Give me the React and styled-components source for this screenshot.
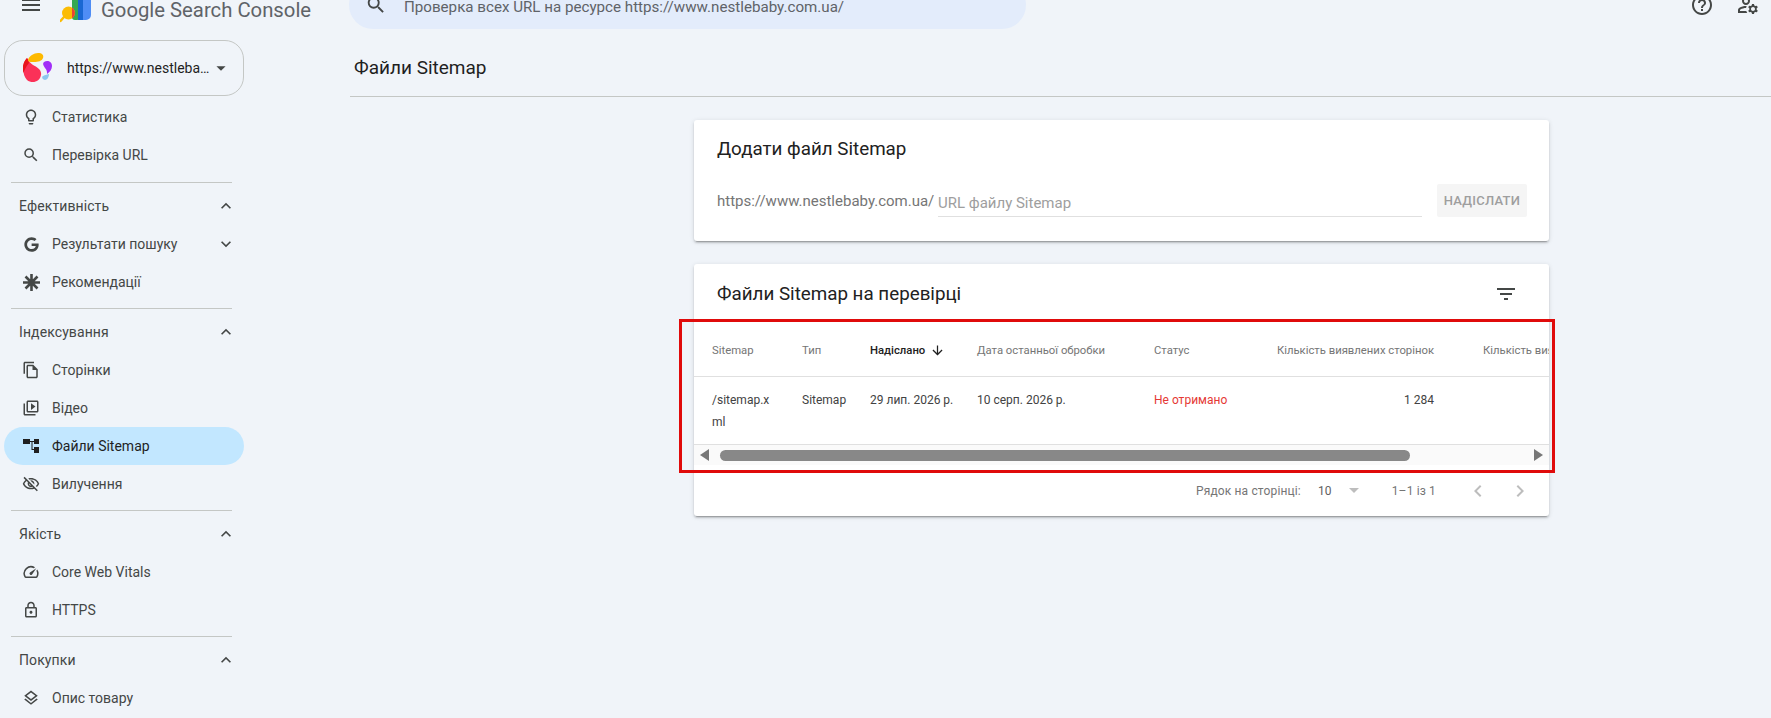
import styled, { createGlobalStyle } from "styled-components"
import {
  MdMenu,
  MdSearch,
  MdHelpOutline,
  MdOutlineManageAccounts,
  MdOutlineLightbulb,
  MdKeyboardArrowUp,
  MdKeyboardArrowDown,
  MdOutlineFileCopy,
  MdOutlineVideoLibrary,
  MdOutlineVisibilityOff,
  MdOutlineSpeed,
  MdOutlineLock,
  MdOutlineLayers,
  MdArrowDropDown,
  MdFilterList,
  MdArrowDownward,
  MdChevronLeft,
  MdChevronRight,
} from "react-icons/md"
import { FaGoogle } from "react-icons/fa"

const GlobalStyle = createGlobalStyle`
  * {
    box-sizing: border-box;
  }
  html, body {
    margin: 0;
    height: 718px;
    overflow: hidden;
    background: #f0f4f9;
    font-family: Roboto, "Liberation Sans", sans-serif;
  }
`

const Page = styled.div`
  margin-top: -19px;
  width: 1771px;
`

const TopBar = styled.header`
  display: flex;
  align-items: center;
  height: 48px;
  padding-left: 19px;
`

const IconButton = styled.span`
  display: inline-flex;
  align-items: center;
  justify-content: center;
  margin-right: ${(p) => p.$pull || 0}px;
  color: ${(p) => p.$color || "#444746"};
  font-size: ${(p) => p.$size || 24}px;
`

const Brand = styled.div`
  display: flex;
  align-items: center;
  gap: 10px;
  margin-left: 17px;
  padding-top: 12px;
  width: 289px;
  height: 48px;
`

const BrandName = styled.span`
  margin-top: -2px;
  font-size: 20.3px;
  color: #5f6368;
  white-space: nowrap;
`

const SearchBar = styled.div`
  display: flex;
  align-items: center;
  width: 677px;
  height: 48px;
  padding-left: 16px;
  gap: 17px;
  border-radius: 24px;
  background: #e3ecfb;
`

const SearchText = styled.span`
  padding-top: 3px;
  font-size: 15.15px;
  color: #5f6368;
  white-space: nowrap;
`

const TopActions = styled.div`
  display: flex;
  align-items: center;
  gap: 22px;
  margin-left: auto;
  padding-right: 11px;
`

const Body = styled.div`
  display: flex;
`

const Sidebar = styled.aside`
  flex: 0 0 350px;
  padding: 11px 0 0 4px;
`

const PropertySelect = styled.div`
  display: flex;
  align-items: center;
  width: 240px;
  height: 56px;
  padding-left: 18px;
  border: 1px solid #c4c7c5;
  border-radius: 19px;
`

const PropertyName = styled.span`
  width: 146px;
  margin-left: 14px;
  margin-right: -3px;
  font-size: 14px;
  color: #1f1f1f;
  white-space: nowrap;
  overflow: hidden;
  text-overflow: ellipsis;
`

const Nav = styled.nav`
  width: 240px;
  margin-top: 2px;
`

const Group = styled.div`
  padding-bottom: 8px;
`

const Section = styled.div`
  border-top: 1px solid #c4c7c5;
  margin-left: 7px;
  margin-right: 12px;
  padding-top: 4px;
`

const SectionHead = styled.div`
  display: flex;
  align-items: center;
  justify-content: space-between;
  height: 37px;
  padding-left: 8px;
  font-size: 14px;
  letter-spacing: 0.1px;
  color: #444746;
`

const SectionItems = styled.div`
  margin-left: -7px;
  margin-right: -12px;
  padding-top: 1px;
  padding-bottom: 7px;
`

const NavRow = styled.div`
  display: flex;
  align-items: center;
  height: 38px;
  padding-left: 18px;
  padding-right: 8px;
  border-radius: 19px;
  font-size: 14px;
  color: ${(p) => (p.$active ? "#1f1f1f" : "#444746")};
  background: ${(p) => (p.$active ? "#c2e7ff" : "transparent")};
`

const NavIcon = styled.span`
  display: inline-flex;
  align-items: center;
  justify-content: center;
  width: 18px;
  margin-right: 12px;
  font-size: 20px;
  color: ${(p) => (p.$active ? "#1f1f1f" : "#444746")};
`

const NavLabel = styled.span`
  flex: 1;
  white-space: nowrap;
`

const Main = styled.main`
  flex: 1;
`

const PageTitle = styled.div`
  display: flex;
  align-items: center;
  height: 68px;
  padding: 10px 0 0 4px;
  border-bottom: 1px solid #c4c7c5;
  font-size: 19px;
  color: #1f1f1f;
`

const Cards = styled.div`
  display: flex;
  flex-direction: column;
  gap: 23px;
  width: 855px;
  margin: 23px 0 0 344px;
`

const Card = styled.section`
  position: relative;
  background: #fff;
  border-radius: 3px;
  box-shadow: 0 2px 2px rgba(0, 0, 0, 0.14), 0 3px 1px -2px rgba(0, 0, 0, 0.2),
    0 1px 5px rgba(0, 0, 0, 0.12);
`

const AddCard = styled(Card)`
  height: 121px;
  padding: 18px 22px 0 23px;
`

const CardTitle = styled.h2`
  margin: 0;
  font-size: 18.8px;
  line-height: 22px;
  font-weight: 400;
  color: #212121;
`

const AddRow = styled.div`
  display: flex;
  align-items: flex-end;
  margin-top: 24px;
`

const UrlPrefix = styled.span`
  width: 221px;
  height: 33px;
  line-height: 34px;
  font-size: 15px;
  color: #757575;
  white-space: nowrap;
`

const UrlInput = styled.div`
  width: 484px;
  height: 31px;
  line-height: 35px;
  font-size: 15px;
  color: #9e9e9e;
  border-bottom: 1px solid #e0e0e0;
`

const SubmitButton = styled.div`
  display: flex;
  align-items: center;
  justify-content: center;
  width: 90px;
  height: 33px;
  margin-left: 15px;
  border-radius: 2px;
  background: #f5f5f5;
  color: #9e9e9e;
  font-size: 13px;
  font-weight: 500;
  letter-spacing: 0.25px;
`

const ListHead = styled.div`
  display: flex;
  align-items: center;
  justify-content: space-between;
  height: 60px;
  padding: 0 31px 0 23px;
`

const Table = styled.div`
  overflow: hidden;
`

const Row = styled.div`
  display: grid;
  grid-template-columns: 90px 68px 107px 177px 123px 206px 206px;
  width: 1200px;
  padding-left: 18px;
  height: ${(p) => p.$height}px;
`

const Divider = styled.div`
  border-bottom: 1px solid #e0e0e0;
`

const HeadCell = styled.div`
  display: flex;
  align-items: center;
  gap: 5px;
  justify-content: ${(p) => (p.$right ? "flex-end" : "flex-start")};
  padding-right: ${(p) => (p.$right ? "49px" : "0")};
  font-size: 11.3px;
  font-weight: ${(p) => (p.$sorted ? 500 : 400)};
  white-space: nowrap;
  color: ${(p) => (p.$sorted ? "#212121" : "#757575")};
`

const DataCell = styled.div`
  width: ${(p) => (p.$narrow ? "62px" : "auto")};
  padding-top: 12px;
  padding-right: ${(p) => (p.$right ? "49px" : "0")};
  text-align: ${(p) => (p.$right ? "right" : "left")};
  font-size: 12px;
  line-height: 22px;
  word-break: ${(p) => (p.$narrow ? "break-all" : "normal")};
  color: ${(p) => (p.$error ? "#e53935" : "#424242")};
`

const ScrollBar = styled.div`
  display: flex;
  align-items: center;
  height: 20px;
  padding: 0 6px;
  background: #fafafa;
`

const ScrollArrow = styled.span`
  width: 0;
  height: 0;
  border-top: 6px solid transparent;
  border-bottom: 6px solid transparent;
  border-left: ${(p) => (p.$right ? "9px solid #777" : "0")};
  border-right: ${(p) => (p.$right ? "0" : "9px solid #777")};
`

const ScrollTrack = styled.div`
  flex: 1;
  padding-left: 11px;
`

const ScrollThumb = styled.div`
  width: 690px;
  height: 11px;
  border-radius: 6px;
  background: #888;
`

const Pager = styled.div`
  display: flex;
  align-items: center;
  justify-content: flex-end;
  height: 51px;
  padding-right: 17px;
  font-size: 12px;
  letter-spacing: 0.15px;
  color: #757575;
`

const PagerCount = styled.span`
  margin-left: ${(p) => p.$gap}px;
  color: ${(p) => p.$color || "#757575"};
  white-space: nowrap;
`

const PagerCaret = styled.span`
  width: 0;
  height: 0;
  margin-left: 17px;
  border-left: 5px solid transparent;
  border-right: 5px solid transparent;
  border-top: 5px solid #bdbdbd;
`

const PagerNav = styled.span`
  display: inline-flex;
  margin-left: ${(p) => p.$gap}px;
  font-size: 24px;
  color: #bdbdbd;
`

const Highlight = styled.div`
  position: absolute;
  left: -15px;
  right: -6px;
  top: 55px;
  height: 154px;
  border: 3px solid #e00b0b;
  pointer-events: none;
`

function SearchConsoleLogo() {
  return (
    <svg width="31" height="40" viewBox="0 2 31 40">
      <rect x="12" y="6" width="8" height="25" rx="3" fill="#34a853" />
      <rect x="18" y="1" width="6" height="30" fill="#1967d2" />
      <path d="M23 1a3 3 0 0 1 3-1h2a3 3 0 0 1 3 3v23a5 5 0 0 1-5 5h-3z" fill="#4f8df5" />
      <circle cx="8.5" cy="24" r="6.5" fill="#fbbc04" />
      <path d="M12 18.6a6.5 6.5 0 0 1 0 10.8z" fill="#ea4335" />
      <path d="M4 28l-3.5 4" stroke="#fbbc04" strokeWidth="2.4" strokeLinecap="round" />
    </svg>
  )
}

function PropertyLogo() {
  return (
    <svg width="30" height="30" viewBox="0 0 30 30">
      <path d="M4 5C-1 10-1 22 4 27c5 4 13 2 14-5 1-5-4-8-8-10-3-2-4-4-6-7z" fill="#fb3158" />
      <path d="M4 5C0 9-1 15 0 20c2-3 3-7 6-10 0-2-1-3-2-5z" fill="#e8141c" />
      <path d="M5 7c1-4 6-7 10-7 4 0 6 2 5 5-1 3-5 4-9 4-3 0-6 0-6-2z" fill="#fdb900" />
      <path d="M21 9c3-2 8-1 8 4 0 3-2 6-5 8 0-2 0-4-2-6-1-2-3-4-1-6z" fill="#a12ef7" />
      <path d="M20 23c2-1 5-2 6-2 0 3-2 6-4 6s-4-3-2-4z" fill="#8cc6ee" />
    </svg>
  )
}

function SitemapIcon() {
  return (
    <svg width="16" height="14" viewBox="0 0 16 14" fill="#1f1f1f">
      <rect x="0" y="0" width="7" height="5" />
      <rect x="11" y="0" width="5" height="5" />
      <rect x="11" y="8" width="5" height="6" />
      <path d="M7 2h4v1H9.5v7H11v1H8.5V3H7z" />
    </svg>
  )
}

function AsteriskIcon() {
  return (
    <svg width="17" height="17" viewBox="0 0 17 17" stroke="#444746" strokeWidth="2.6">
      <path d="M8.5 0v17M0 8.5h17M2.5 2.5l12 12M14.5 2.5l-12 12" />
    </svg>
  )
}

const groups = [
  {
    title: "Ефективність",
    items: [
      { label: "Результати пошуку", icon: <FaGoogle size={15} />, more: true },
      { label: "Рекомендації", icon: <AsteriskIcon /> },
    ],
  },
  {
    title: "Індексування",
    items: [
      { label: "Сторінки", icon: <MdOutlineFileCopy /> },
      { label: "Відео", icon: <MdOutlineVideoLibrary /> },
      { label: "Файли Sitemap", icon: <SitemapIcon />, active: true },
      { label: "Вилучення", icon: <MdOutlineVisibilityOff /> },
    ],
  },
  {
    title: "Якість",
    items: [
      { label: "Core Web Vitals", icon: <MdOutlineSpeed /> },
      { label: "HTTPS", icon: <MdOutlineLock /> },
    ],
  },
  {
    title: "Покупки",
    items: [{ label: "Опис товару", icon: <MdOutlineLayers /> }],
  },
]

function NavItem({ item }) {
  return (
    <NavRow $active={item.active}>
      <NavIcon $active={item.active}>{item.icon}</NavIcon>
      <NavLabel>{item.label}</NavLabel>
      {item.more && (
        <IconButton $size={20}>
          <MdKeyboardArrowDown />
        </IconButton>
      )}
    </NavRow>
  )
}

function App() {
  return (
    <Page>
      <GlobalStyle />
      <TopBar>
        <IconButton $size={24}>
          <MdMenu />
        </IconButton>
        <Brand>
          <SearchConsoleLogo />
          <BrandName>Google Search Console</BrandName>
        </Brand>
        <SearchBar>
          <IconButton $size={22}>
            <MdSearch />
          </IconButton>
          <SearchText>
            Проверка всех URL на ресурсе https://www.nestlebaby.com.ua/
          </SearchText>
        </SearchBar>
        <TopActions>
          <IconButton>
            <MdHelpOutline />
          </IconButton>
          <IconButton>
            <MdOutlineManageAccounts />
          </IconButton>
        </TopActions>
      </TopBar>

      <Body>
        <Sidebar>
          <PropertySelect>
            <PropertyLogo />
            <PropertyName>https://www.nestlebaby.com.ua/</PropertyName>
            <IconButton $size={22}>
              <MdArrowDropDown />
            </IconButton>
          </PropertySelect>
          <Nav>
            <Group>
              <NavItem item={{ label: "Статистика", icon: <MdOutlineLightbulb /> }} />
              <NavItem item={{ label: "Перевірка URL", icon: <MdSearch /> }} />
            </Group>
            {groups.map((group) => (
              <Section key={group.title}>
                <SectionHead>
                  {group.title}
                  <IconButton $size={20} $pull={-4}>
                    <MdKeyboardArrowUp />
                  </IconButton>
                </SectionHead>
                <SectionItems>
                  {group.items.map((item) => (
                    <NavItem key={item.label} item={item} />
                  ))}
                </SectionItems>
              </Section>
            ))}
          </Nav>
        </Sidebar>

        <Main>
          <PageTitle>Файли Sitemap</PageTitle>
          <Cards>
            <AddCard>
              <CardTitle>Додати файл Sitemap</CardTitle>
              <AddRow>
                <UrlPrefix>https://www.nestlebaby.com.ua/</UrlPrefix>
                <UrlInput>URL файлу Sitemap</UrlInput>
                <SubmitButton>НАДІСЛАТИ</SubmitButton>
              </AddRow>
            </AddCard>

            <Card>
              <ListHead>
                <CardTitle>Файли Sitemap на перевірці</CardTitle>
                <IconButton $size={24}>
                  <MdFilterList />
                </IconButton>
              </ListHead>
              <Table>
                <Divider>
                  <Row $height={52}>
                    <HeadCell>Sitemap</HeadCell>
                    <HeadCell>Тип</HeadCell>
                    <HeadCell $sorted>
                      Надіслано <MdArrowDownward size={15} />
                    </HeadCell>
                    <HeadCell>Дата останньої обробки</HeadCell>
                    <HeadCell>Статус</HeadCell>
                    <HeadCell $right>Кількість виявлених сторінок</HeadCell>
                    <HeadCell>Кількість виявлених відео</HeadCell>
                  </Row>
                </Divider>
                <Divider>
                  <Row $height={67}>
                    <DataCell $narrow>/sitemap.xml</DataCell>
                    <DataCell>Sitemap</DataCell>
                    <DataCell>29 лип. 2026 р.</DataCell>
                    <DataCell>10 серп. 2026 р.</DataCell>
                    <DataCell $error>Не отримано</DataCell>
                    <DataCell $right>1 284</DataCell>
                    <DataCell />
                  </Row>
                </Divider>
                <ScrollBar>
                  <ScrollArrow />
                  <ScrollTrack>
                    <ScrollThumb />
                  </ScrollTrack>
                  <ScrollArrow $right />
                </ScrollBar>
              </Table>
              <Pager>
                Рядок на сторінці:
                <PagerCount $gap={17} $color="#616161">10</PagerCount>
                <PagerCaret />
                <PagerCount $gap={33}>1–1 із 1</PagerCount>
                <PagerNav $gap={30}>
                  <MdChevronLeft />
                </PagerNav>
                <PagerNav $gap={18}>
                  <MdChevronRight />
                </PagerNav>
              </Pager>
              <Highlight />
            </Card>
          </Cards>
        </Main>
      </Body>
    </Page>
  )
}

export default App
